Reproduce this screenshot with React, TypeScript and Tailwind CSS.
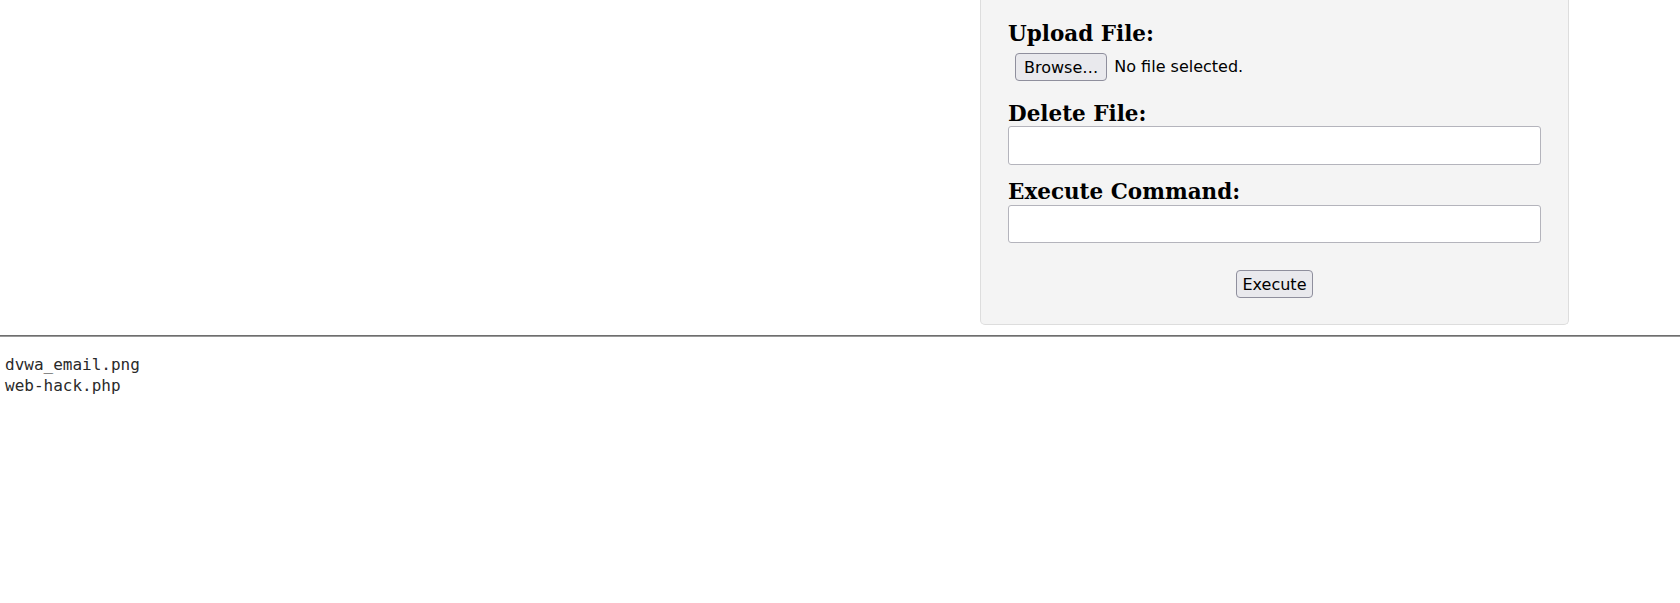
import React from "react";

export default function App() {
  return (
    <div className="min-h-screen bg-white">
      <div className="ml-[980px] w-[589px] rounded-b-[5px] border border-t-0 border-[#dddddd] bg-[#f4f4f4] px-[27px] pt-[22px] pb-[26px]">
        <h3 className="font-['DejaVu_Serif',serif] text-[21.5px] font-bold leading-[24px] text-black">
          Upload File:
        </h3>
        <div className="mt-[7px] ml-[7px] flex h-[28px] items-center gap-[7px] font-['DejaVu_Sans',sans-serif] text-[16px] text-black">
          <button className="h-[28px] rounded-[4px] border border-[#8f8f9d] bg-[#e9e9ed] px-[8px] leading-[19px] text-black">
            Browse…
          </button>
          <span>No file selected.</span>
        </div>
        <h3 className="mt-[21px] font-['DejaVu_Serif',serif] text-[21.5px] font-bold leading-[24px] text-black">
          Delete File:
        </h3>
        <input
          type="text"
          className="mt-0 block h-[39px] w-full rounded-[3px] border border-[#b4b4bc] bg-white px-2 outline-none"
        />
        <h3 className="mt-[15px] font-['DejaVu_Serif',serif] text-[21.5px] font-bold leading-[24px] text-black">
          Execute Command:
        </h3>
        <input
          type="text"
          className="mt-[1px] block h-[38px] w-full rounded-[3px] border border-[#b4b4bc] bg-white px-2 outline-none"
        />
        <div className="mt-[27px] flex justify-center">
          <button className="h-[28px] rounded-[4px] border border-[#8f8f9d] bg-[#e9e9ed] px-[6px] font-['DejaVu_Sans',sans-serif] text-[16px] leading-[19px] text-black">
            Execute
          </button>
        </div>
      </div>
      <div className="mt-[10px] h-[2px] border-t border-b border-t-[#6e6e6e] border-b-[#9a9a9a]" />
      <pre className="mt-[17px] pl-[5px] font-['DejaVu_Sans_Mono',monospace] text-[16px] leading-[21px] text-[#2a2a2a]">
        {"dvwa_email.png\nweb-hack.php"}
      </pre>
    </div>
  );
}
